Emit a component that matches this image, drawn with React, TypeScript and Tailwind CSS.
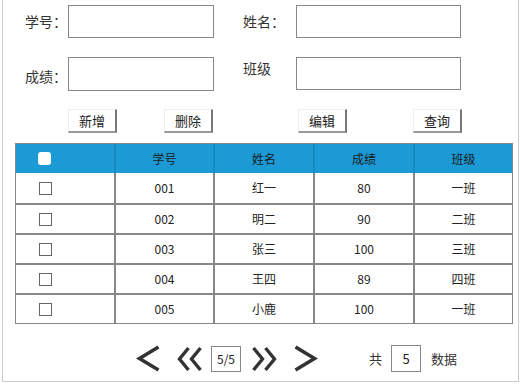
import React from 'react';

const rows = [
  { id: '001', name: '红一', score: '80', cls: '一班' },
  { id: '002', name: '明二', score: '90', cls: '二班' },
  { id: '003', name: '张三', score: '100', cls: '三班' },
  { id: '004', name: '王四', score: '89', cls: '四班' },
  { id: '005', name: '小鹿', score: '100', cls: '一班' },
];

const font = { fontFamily: '"Microsoft YaHei", "Noto Sans CJK SC", "Noto Sans", sans-serif' };

function Btn({ label, className }: { label: string; className?: string }) {
  return (
    <button
      className={`shrink-0 w-[49px] h-[24px] bg-white text-[13px] text-[#222] border border-[#eee] border-r-2 border-b-2 border-r-[#777] border-b-[#999] leading-none ${className ?? ''}`}
    >
      {label}
    </button>
  );
}

function Chevron({ dir, double }: { dir: 'l' | 'r'; double?: boolean }) {
  if (double) {
    const pts = dir === 'l' ? ['12,2 3,13 12,24', '24,2 15,13 24,24'] : ['3,2 12,13 3,24', '15,2 24,13 15,24'];
    return (
      <svg width="28" height="26" viewBox="0 0 27 26" className="block">
        {pts.map(p => (
          <polyline key={p} points={p} fill="none" stroke="#333" strokeWidth="3.4" strokeLinejoin="miter" />
        ))}
      </svg>
    );
  }
  const p = dir === 'l' ? '22,2 3,13.5 22,25' : '2,2 21,13.5 2,25';
  return (
    <svg width="25" height="27" viewBox="0 0 24 27" className="block">
      <polyline points={p} fill="none" stroke="#333" strokeWidth="3.6" strokeLinejoin="miter" />
    </svg>
  );
}

const label = 'shrink-0 whitespace-nowrap text-[14px] text-[#333]';
const inputCls = 'shrink-0 border border-[#888] bg-white';
const cols = 'grid grid-cols-[98px_99px_100px_100px_1fr]';

export default function App() {
  return (
    <div className="w-[522px] h-[385px] bg-white overflow-hidden" style={font}>
      <div className="ml-[2px] w-[517px] h-[382px] border border-t-0 border-[#ccc]">
        {/* form row 1 */}
        <div className="flex items-center pt-[5px]">
          <div className={`${label} w-[65px] pl-[22px]`}>学号：</div>
          <input className={`${inputCls} w-[146px] h-[33px]`} />
          <div className={`${label} w-[53px] ml-[29px]`}>姓名：</div>
          <input className={`${inputCls} w-[165px] h-[33px]`} />
        </div>

        {/* form row 2 */}
        <div className="flex mt-[19px]">
          <div className={`${label} w-[65px] pl-[22px] pt-[9px]`}>成绩：</div>
          <input className={`${inputCls} w-[146px] h-[34px]`} />
          <div className={`${label} w-[53px] ml-[29px] pt-[1px]`}>班级</div>
          <input className={`${inputCls} w-[165px] h-[33px]`} />
        </div>

        {/* buttons */}
        <div className="flex mt-[18px]">
          <Btn label="新增" className="ml-[65px]" />
          <Btn label="删除" className="ml-[47px]" />
          <Btn label="编辑" className="ml-[85px]" />
          <Btn label="查询" className="ml-[66px]" />
        </div>

        {/* table */}
        <div className="mt-[10px] ml-[12px] w-[498px] border border-[#888]">
          <div className={`${cols} h-[29px] bg-[#1c9ad6] text-[12px] text-[#1a1a1a]`}>
            <div className="flex items-center pl-[22px]">
              <span className="w-[13px] h-[13px] bg-white rounded-[3px] block" />
            </div>
            {['学号', '姓名', '成绩', '班级'].map(h => (
              <div key={h} className="flex items-center justify-center border-l-2 border-[#1788bd]">{h}</div>
            ))}
          </div>
          {rows.map((r, i) => (
            <div
              key={r.id}
              className={`${cols} h-[30px] text-[12px] text-[#222] ${i > 0 ? 'border-t-2 border-[#888]' : ''}`}
            >
              <div className="flex items-center pl-[23px]">
                <span className="w-[13px] h-[13px] border border-[#666] bg-white block" />
              </div>
              {[r.id, r.name, r.score, r.cls].map((v, j) => (
                <div key={j} className="flex items-center justify-center border-l-2 border-[#888]">{v}</div>
              ))}
            </div>
          ))}
        </div>

        {/* pagination */}
        <div className="flex items-center mt-[21px] h-[27px]">
          <div className="ml-[133px] shrink-0"><Chevron dir="l" /></div>
          <div className="ml-[15px] shrink-0"><Chevron dir="l" double /></div>
          <div className="ml-[7px] shrink-0 w-[30px] h-[26px] border border-[#888] flex items-center justify-center text-[12px] text-[#222]">5/5</div>
          <div className="ml-[9px] shrink-0"><Chevron dir="r" double /></div>
          <div className="ml-[15px] shrink-0"><Chevron dir="r" /></div>
          <div className="ml-[51px] shrink-0 text-[13px] text-[#333]">共</div>
          <div className="ml-[9px] shrink-0 w-[30px] h-[27px] border border-[#888] flex items-center justify-center text-[13px] text-[#222]">5</div>
          <div className="ml-[10px] shrink-0 whitespace-nowrap text-[13px] text-[#333]">数据</div>
        </div>
      </div>
    </div>
  );
}
